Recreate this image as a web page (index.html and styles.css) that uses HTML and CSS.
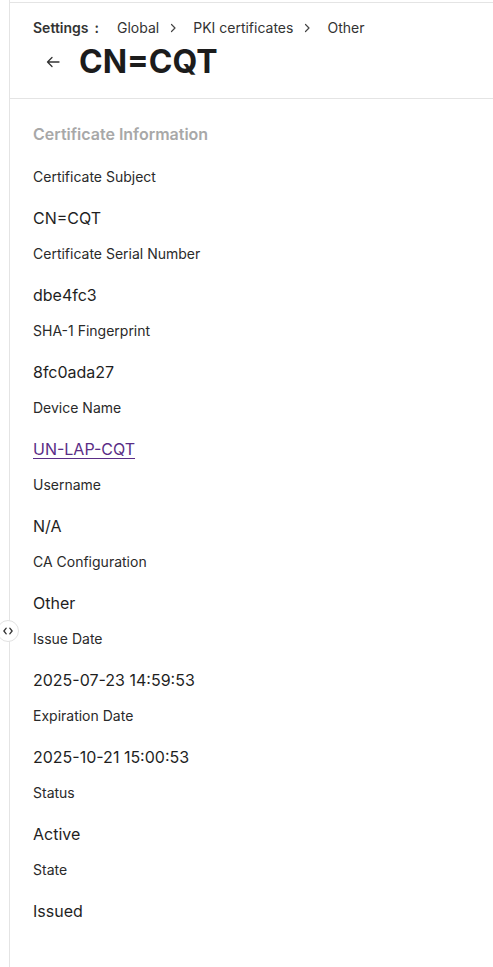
FILE: index.html
```html
<!DOCTYPE html>
<html>
<head>
<meta charset="utf-8">
<link rel="stylesheet" href="styles.css">
</head>
<body>
<div class="app">
  <div class="rail">
    <button class="toggle" aria-label="toggle">
      <svg width="10" height="8" viewBox="0 0 10 8"><path d="M3.2 1.2 L0.9 4 L3.2 6.8 M6.8 1.2 L9.1 4 L6.8 6.8" fill="none" stroke="#333" stroke-width="1.3" stroke-linecap="round" stroke-linejoin="round"/></svg>
    </button>
  </div>
  <main class="main">
    <header class="header">
      <nav class="crumbs">
        <span class="crumb-root">Settings</span><span class="colon">:</span>
        <span class="crumb">Global</span>
        <svg class="chev" width="7" height="10" viewBox="0 0 7 10"><path d="M1.5 1.5 L5 5 L1.5 8.5" fill="none" stroke="#444" stroke-width="1.2" stroke-linecap="round" stroke-linejoin="round"/></svg>
        <span class="crumb">PKI certificates</span>
        <svg class="chev" width="7" height="10" viewBox="0 0 7 10"><path d="M1.5 1.5 L5 5 L1.5 8.5" fill="none" stroke="#444" stroke-width="1.2" stroke-linecap="round" stroke-linejoin="round"/></svg>
        <span class="crumb">Other</span>
      </nav>
      <div class="title-row">
        <svg class="back" width="14" height="12" viewBox="0 0 14 12"><path d="M13 6 H1.5 M6 1.5 L1.5 6 L6 10.5" fill="none" stroke="#333" stroke-width="1.3" stroke-linecap="round" stroke-linejoin="round"/></svg>
        <h1 class="title">CN=CQT</h1>
      </div>
    </header>
    <section class="content">
      <h2 class="section-title">Certificate Information</h2>
      <dl class="fields">
        <div class="field"><dt>Certificate Subject</dt><dd>CN=CQT</dd></div>
        <div class="field"><dt>Certificate Serial Number</dt><dd>dbe4fc3</dd></div>
        <div class="field"><dt>SHA-1 Fingerprint</dt><dd>8fc0ada27</dd></div>
        <div class="field"><dt>Device Name</dt><dd><a class="link" href="#">UN-LAP-CQT</a></dd></div>
        <div class="field"><dt>Username</dt><dd>N/A</dd></div>
        <div class="field"><dt>CA Configuration</dt><dd>Other</dd></div>
        <div class="field"><dt>Issue Date</dt><dd>2025-07-23 14:59:53</dd></div>
        <div class="field"><dt>Expiration Date</dt><dd>2025-10-21 15:00:53</dd></div>
        <div class="field"><dt>Status</dt><dd>Active</dd></div>
        <div class="field"><dt>State</dt><dd>Issued</dd></div>
      </dl>
    </section>
  </main>
</div>
</body>
</html>
```

FILE: styles.css
```css
* { box-sizing: border-box; }
html, body { margin: 0; padding: 0; background: #fff; }
body {
  font-family: Inter, "Noto Sans", "Liberation Sans", sans-serif;
  color: #222;
  width: 493px;
  height: 967px;
  overflow: hidden;
}
.app {
  display: flex;
  height: 967px;
}
.rail {
  position: relative;
  width: 10px;
  flex: none;
  border-right: 1px solid #e4e4e4;
}
.toggle {
  position: absolute;
  left: -3px;
  top: 620px;
  width: 22px;
  height: 22px;
  border-radius: 50%;
  border: 1px solid #e2e2e2;
  background: #fff;
  padding: 0;
  display: flex;
  align-items: center;
  justify-content: center;
  z-index: 2;
}
.main {
  flex: 1;
  min-width: 0;
  padding-top: 2px;
}
.header {
  border-top: 1px solid #e4e4e4;
  border-bottom: 1px solid #e4e4e4;
  padding: 15px 0 18px 23px;
}
.crumbs {
  display: flex;
  align-items: center;
  height: 20px;
  font-size: 14px;
  line-height: 20px;
  color: #333;
}
.crumb-root { font-weight: 600; color: #333; }
.colon { font-weight: 600; margin-left: 6px; margin-right: 18px; }
.chev { margin: 0 16px 0 11px; }
.title-row {
  display: flex;
  align-items: center;
  margin-top: 6px;
  height: 36px;
  padding-left: 13px;
}
.back { margin-right: 19px; }
.title {
  margin: 0;
  font-size: 32px;
  line-height: 36px;
  font-weight: 700;
  color: #1c1c1c;
}
.content {
  padding: 25px 0 0 23px;
}
.section-title {
  margin: 0;
  font-size: 16px;
  line-height: 20px;
  font-weight: 600;
  color: #a8a8a8;
}
.fields {
  margin: 23px 0 0 0;
}
.field {
  display: flex;
  flex-direction: column;
  gap: 19px;
  margin-bottom: 14px;
}
.field dt {
  font-size: 14px;
  line-height: 20px;
  color: #2a2a2a;
}
.field dd {
  margin: 0;
  font-size: 16px;
  line-height: 24px;
  color: #1f1f1f;
}
.link {
  color: #5a2d86;
  text-decoration: underline;
  text-underline-offset: 3px;
  text-decoration-thickness: 1px;
}
```
